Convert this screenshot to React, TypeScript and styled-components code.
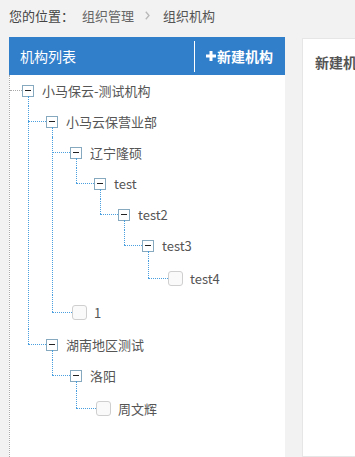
import React from 'react';
import styled, { createGlobalStyle, css } from 'styled-components';

const GlobalStyle = createGlobalStyle`
  html, body {
    margin: 0;
    padding: 0;
    overflow: hidden;
    background: #f2f2f2;
    font-family: "Noto Sans CJK SC", "Noto Sans", sans-serif;
  }
`;

const LINE = '#4a9fde';
const ROOT_LINE = '#aaaaaa';

const Page = styled.div`
  padding-left: 9px;
  height: 100vh;
  box-sizing: border-box;
`;

const Breadcrumb = styled.div`
  display: flex;
  align-items: center;
  height: 30px;
  margin-bottom: 7px;
  font-size: 13px;
  color: #555;
  white-space: nowrap;
`;

const CrumbLabel = styled.span`
  color: #444;
  margin-right: 8px;
`;

const CrumbLink = styled.span`
  color: #666;
`;

const CrumbSep = styled.svg`
  margin: 0 13px 0 11px;
  flex-shrink: 0;
`;

const Content = styled.div`
  display: flex;
  gap: 17px;
  align-items: flex-start;
`;

const TreePanel = styled.section`
  width: 276px;
  flex-shrink: 0;
  height: calc(100vh - 37px);
  display: flex;
  flex-direction: column;
  background: #fff;
`;

const PanelHeader = styled.header`
  display: flex;
  align-items: center;
  justify-content: space-between;
  height: 38px;
  padding: 0 12px 0 11px;
  background: #317ecb;
  color: #fff;
  font-size: 14px;
`;

const AddButton = styled.button`
  display: flex;
  align-items: center;
  height: 31px;
  padding: 0 0 0 11px;
  border: none;
  border-left: 1px solid #fff;
  background: transparent;
  color: #fff;
  font: inherit;
  font-weight: bold;
  cursor: pointer;
`;

const TreeBody = styled.div`
  flex: 1;
  border-left: 1px dotted ${ROOT_LINE};
`;

const TreeList = styled.ul<{ $root?: boolean }>`
  list-style: none;
  margin: 0;
  padding: 0 0 0 ${p => (p.$root ? 12 : 24)}px;
  position: relative;

  ${p =>
    !p.$root &&
    css`
      &::before {
        content: '';
        position: absolute;
        left: 6px;
        top: -10px;
        height: 10px;
        border-left: 1px dotted ${LINE};
      }
    `}
`;

const Item = styled.li<{ $h: number; $last: boolean; $root?: boolean; $leaf: boolean }>`
  position: relative;

  &::before {
    content: '';
    position: absolute;
    top: ${p => Math.floor(p.$h / 2)}px;
    left: ${p => (p.$root ? -12 : -18)}px;
    width: ${p => (p.$root ? 12 : p.$leaf ? 20 : 18)}px;
    border-top: 1px dotted ${p => (p.$root ? ROOT_LINE : LINE)};
  }

  ${p =>
    !p.$root &&
    css`
      &::after {
        content: '';
        position: absolute;
        left: -18px;
        top: 0;
        height: ${p.$last ? `${Math.floor(p.$h / 2)}px` : '100%'};
        border-left: 1px dotted ${LINE};
      }
    `}
`;

const Row = styled.div<{ $h: number }>`
  display: flex;
  align-items: center;
  height: ${p => p.$h}px;
  font-size: 13px;
  color: #555;
  white-space: nowrap;
`;

const Toggle = styled.span`
  position: relative;
  width: 12px;
  height: 12px;
  box-sizing: border-box;
  border: 1px solid #86a9bf;
  background: #fff;
  flex-shrink: 0;

  &::after {
    content: '';
    position: absolute;
    left: 2px;
    top: 4px;
    width: 6px;
    height: 1px;
    background: #222;
  }
`;

const Check = styled.span`
  width: 15px;
  height: 15px;
  box-sizing: border-box;
  margin-left: 2px;
  border: 1px solid #cfcfcf;
  border-radius: 3px;
  background: #fafafa;
  flex-shrink: 0;
`;

const Label = styled.span<{ $leaf: boolean }>`
  margin-left: ${p => (p.$leaf ? 7 : 8)}px;
`;

const FormPanel = styled.section`
  width: 300px;
  flex-shrink: 0;
  height: calc(100vh - 38px);
  margin-top: 1px;
  box-sizing: border-box;
  background: #fff;
  border: 1px solid #e6e6e6;
`;

const FormTitle = styled.h3`
  margin: 0;
  padding: 13px 12px;
  font-size: 14px;
  line-height: 20px;
  font-weight: bold;
  color: #555;
`;

interface OrgNode {
  label: string;
  children?: OrgNode[];
}

const TREE: OrgNode[] = [
  {
    label: '小马保云-测试机构',
    children: [
      {
        label: '小马云保营业部',
        children: [
          {
            label: '辽宁隆硕',
            children: [
              {
                label: 'test',
                children: [
                  {
                    label: 'test2',
                    children: [{ label: 'test3', children: [{ label: 'test4' }] }],
                  },
                ],
              },
            ],
          },
          { label: '1' },
        ],
      },
      {
        label: '湖南地区测试',
        children: [{ label: '洛阳', children: [{ label: '周文辉' }] }],
      },
    ],
  },
];

function TreeNode({ node, last, root }: { node: OrgNode; last: boolean; root?: boolean }) {
  const leaf = !node.children || node.children.length === 0;
  const h = leaf ? 34 : 31;
  return (
    <Item $h={h} $last={last} $root={root} $leaf={leaf}>
      <Row $h={h}>
        {leaf ? <Check /> : <Toggle />}
        <Label $leaf={leaf}>{node.label}</Label>
      </Row>
      {!leaf && (
        <TreeList>
          {node.children!.map((c, i) => (
            <TreeNode key={c.label} node={c} last={i === node.children!.length - 1} />
          ))}
        </TreeList>
      )}
    </Item>
  );
}

export default function App() {
  return (
    <Page>
      <GlobalStyle />
      <Breadcrumb>
        <CrumbLabel>您的位置：</CrumbLabel>
        <CrumbLink>组织管理</CrumbLink>
        <CrumbSep width="5" height="9" viewBox="0 0 5 9">
          <path d="M0.8 0.8 L4 4.5 L0.8 8.2" fill="none" stroke="#b8b8b8" strokeWidth="1.3" />
        </CrumbSep>
        <span>组织机构</span>
      </Breadcrumb>
      <Content>
        <TreePanel>
          <PanelHeader>
            <span>机构列表</span>
            <AddButton>
              <svg width="10" height="10" viewBox="0 0 10 10" style={{ marginRight: 1 }}>
                <rect x="3.5" y="0" width="3" height="10" fill="#fff" />
                <rect x="0" y="3.5" width="10" height="3" fill="#fff" />
              </svg>
              新建机构
            </AddButton>
          </PanelHeader>
          <TreeBody>
            <TreeList $root>
              {TREE.map((n, i) => (
                <TreeNode key={n.label} node={n} last={i === TREE.length - 1} root />
              ))}
            </TreeList>
          </TreeBody>
        </TreePanel>
        <FormPanel>
          <FormTitle>新建机构</FormTitle>
        </FormPanel>
      </Content>
    </Page>
  );
}
